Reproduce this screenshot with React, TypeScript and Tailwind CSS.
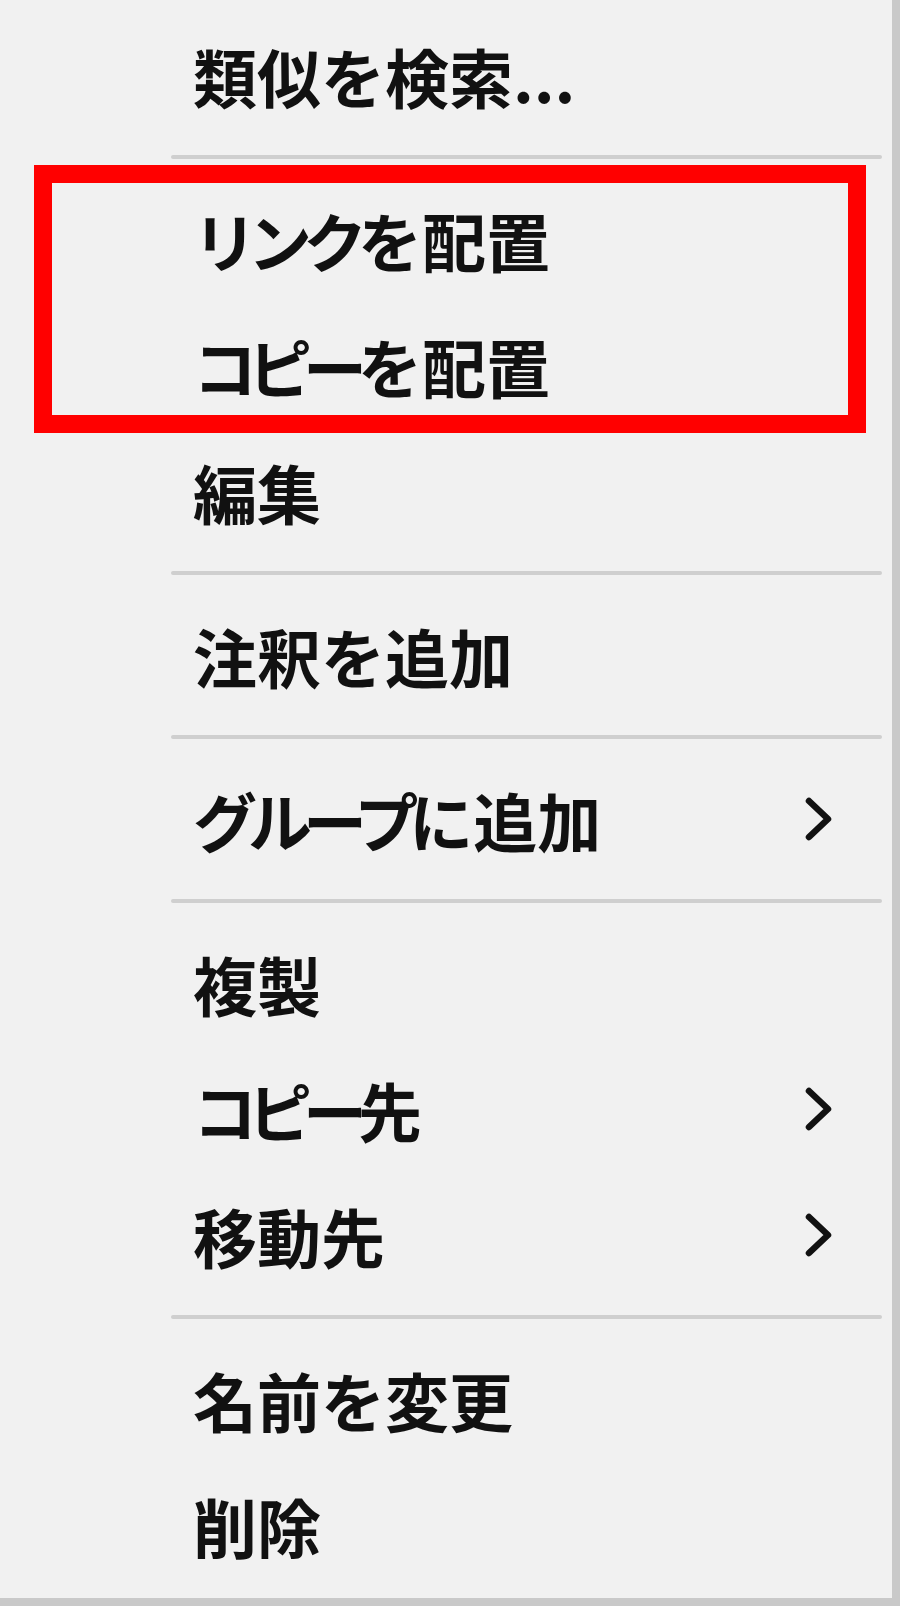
import React from "react";

type Entry = { label: string; sub?: boolean } | "sep";

const entries: Entry[] = [
  { label: "類似を検索..." },
  "sep",
  { label: "リンクを配置" },
  { label: "コピーを配置" },
  { label: "編集" },
  "sep",
  { label: "注釈を追加" },
  "sep",
  { label: "グループに追加", sub: true },
  "sep",
  { label: "複製" },
  { label: "コピー先", sub: true },
  { label: "移動先", sub: true },
  "sep",
  { label: "名前を変更" },
  { label: "削除" },
];

// katakana is set narrower than kanji in the menu font
function splitKana(text: string) {
  return text.split(/([\u30A0-\u30FF]+)/).filter(Boolean);
}

function Chevron() {
  return (
    <svg width="30" height="46" viewBox="0 0 30 46" className="absolute left-[803px] top-1/2 -translate-y-1/2">
      <polyline points="6,5 25,23 6,41" fill="none" stroke="#111" strokeWidth="6.5" strokeLinecap="round" strokeLinejoin="round" />
    </svg>
  );
}

function Item({ label, sub }: { label: string; sub?: boolean }) {
  return (
    <div className="relative h-[126px] flex items-center pl-[193px]">
      <span className="text-[64px] font-bold leading-none text-[#111] whitespace-nowrap">
        {splitKana(label).map((part, i) =>
          /[\u30A0-\u30FF]/.test(part) ? (
            <span key={i} className="tracking-[-9px]">
              {part}
            </span>
          ) : (
            <span key={i}>{part}</span>
          )
        )}
      </span>
      {sub && <Chevron />}
    </div>
  );
}

export default function App() {
  return (
    <div
      className="relative w-[900px] h-[1606px] bg-[#f1f1f1] border-r-[8px] border-b-[8px] border-[#c9c9c9] overflow-hidden"
      style={{ fontFamily: '"Noto Sans CJK JP", "Noto Sans", sans-serif' }}
    >
      <div className="pt-[12px]">
        {entries.map((e, i) =>
          e === "sep" ? (
            <div key={i} className="h-[38px] flex items-center pl-[171px] pr-[10px]">
              <div className="h-[4px] w-full bg-[#cfcfcf] rounded-full" />
            </div>
          ) : (
            <Item key={i} label={e.label} sub={e.sub} />
          )
        )}
      </div>
      {/* highlight box */}
      <div className="absolute left-[34px] top-[165px] w-[832px] h-[268px] border-[18px] border-[#ff0000]" />
    </div>
  );
}
